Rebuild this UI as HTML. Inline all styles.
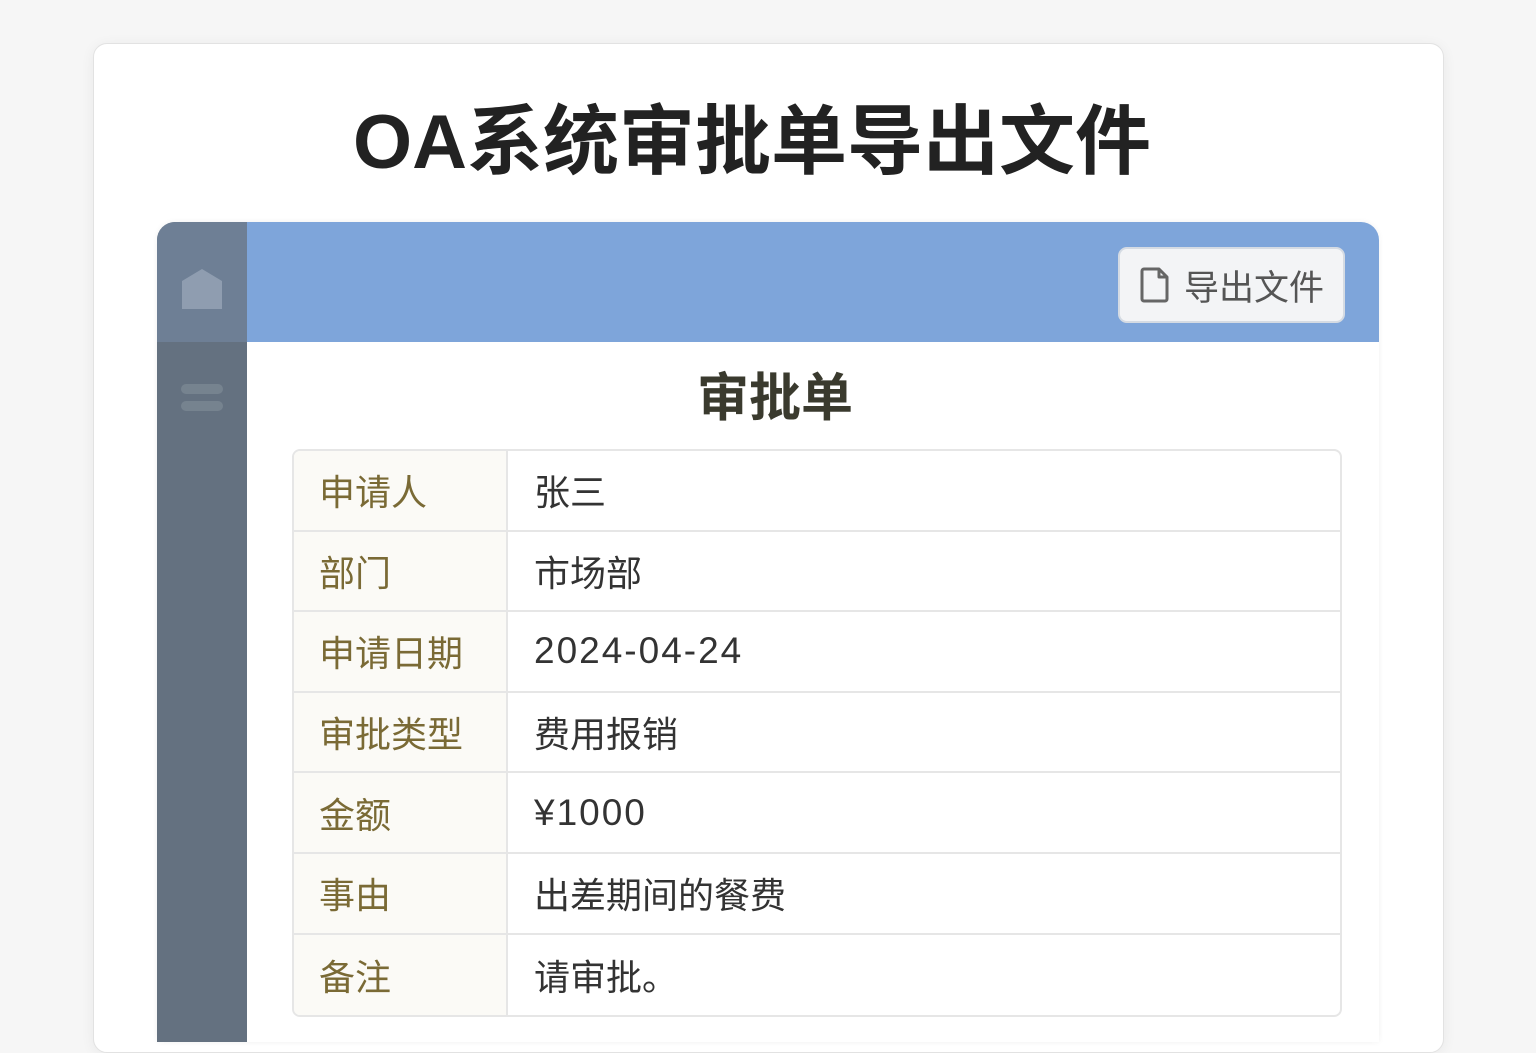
<!DOCTYPE html>
<html><head><meta charset="utf-8"><style>
*{margin:0;padding:0;box-sizing:border-box}
body{width:1536px;height:1024px;background:#f6f6f6;font-family:"Liberation Sans","Noto Sans CJK SC",sans-serif;overflow:hidden;position:relative}
.card{position:absolute;left:93px;top:43px;width:1351px;height:1010px;background:#fff;border:1px solid #e2e2e2;border-radius:14px;box-shadow:0 2px 14px rgba(0,0,0,.06)}
h1{position:absolute;left:352px;width:800px;top:98px;text-align:center;font-size:76px;font-weight:bold;color:#222;line-height:90px;white-space:nowrap}
.app{position:absolute;left:157px;top:222px;width:1222px;height:820px;background:#fff;border-radius:18px 18px 0 0;overflow:hidden;box-shadow:0 0 6px rgba(0,0,0,.06)}
.side{position:absolute;left:0;top:0;width:90px;height:100%;background:#647180}
.sidetop{position:absolute;left:0;top:0;width:90px;height:120px;background:#6e7f95}
.hdr{position:absolute;left:90px;top:0;right:0;height:120px;background:#7ea5da}
.btn{position:absolute;left:961px;top:25px;width:227px;height:76px;background:#f3f4f6;border:2px solid #d5dbe3;border-radius:9px;font-size:35px;color:#555;display:flex;align-items:center;padding-left:20px}
.btn span{margin-left:14px}
h2{position:absolute;left:675px;width:200px;top:364px;text-align:center;font-size:52px;font-weight:bold;color:#3a3a2e;line-height:70px}
table{position:absolute;left:292px;top:449px;width:1050px;border-collapse:separate;border-spacing:0;border:2px solid #e6e6e6;border-radius:8px;overflow:hidden}
td{height:80.6px;border-bottom:2px solid #e6e6e6;font-size:36px;vertical-align:middle}
tr:last-child td{border-bottom:none}
td.l{width:214px;background:#fbfaf6;color:#7a6a35;padding-left:25px;border-right:2px solid #e6e6e6}
td.v{color:#333;padding-left:26px}
.n{letter-spacing:2px;font-size:37px}
</style></head><body>
<div class="card"></div>
<h1>OA系统审批单导出文件</h1>
<div class="app">
<div class="side"></div><div class="sidetop"></div>
<svg style="position:absolute;left:24px;top:46px" width="42" height="42" viewBox="0 0 42 42"><path d="M1 13 L21 1 L41 13 V41 H1 Z" fill="#8f9db0"/></svg>
<div style="position:absolute;left:24px;top:162px;width:42px;height:10px;border-radius:5px;background:#76838f"></div>
<div style="position:absolute;left:24px;top:179px;width:42px;height:10px;border-radius:5px;background:#76838f"></div>
<div class="hdr"></div>
<div class="btn"><svg width="30" height="36" viewBox="0 0 30 36"><path d="M4 2 H19 L27 10 V32 a2 2 0 0 1 -2 2 H4 a2 2 0 0 1 -2 -2 V4 a2 2 0 0 1 2 -2 Z M19 2 V10 H27" fill="none" stroke="#666" stroke-width="3" stroke-linejoin="round"/></svg><span>导出文件</span></div>
</div>
<h2>审批单</h2>
<table>
<tr><td class="l">申请人</td><td class="v">张三</td></tr>
<tr><td class="l">部门</td><td class="v">市场部</td></tr>
<tr><td class="l">申请日期</td><td class="v n">2024-04-24</td></tr>
<tr><td class="l">审批类型</td><td class="v">费用报销</td></tr>
<tr><td class="l">金额</td><td class="v n">¥1000</td></tr>
<tr><td class="l">事由</td><td class="v">出差期间的餐费</td></tr>
<tr><td class="l">备注</td><td class="v">请审批。</td></tr>
</table>
</body></html>
